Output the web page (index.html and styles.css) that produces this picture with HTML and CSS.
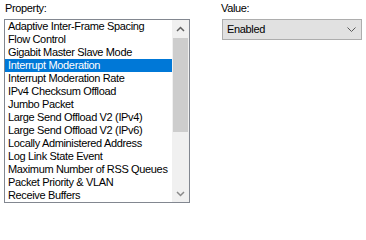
FILE: index.html
```html
<!DOCTYPE html>
<html>
<head>
<meta charset="utf-8">
<link rel="stylesheet" href="styles.css">
</head>
<body>
<div class="dialog">
  <div class="col col-left">
    <div class="label">Property:</div>
    <div class="listbox">
      <div class="items">
        <div class="item">Adaptive Inter-Frame Spacing</div>
        <div class="item">Flow Control</div>
        <div class="item">Gigabit Master Slave Mode</div>
        <div class="item selected">Interrupt Moderation</div>
        <div class="item">Interrupt Moderation Rate</div>
        <div class="item">IPv4 Checksum Offload</div>
        <div class="item">Jumbo Packet</div>
        <div class="item">Large Send Offload V2 (IPv4)</div>
        <div class="item">Large Send Offload V2 (IPv6)</div>
        <div class="item">Locally Administered Address</div>
        <div class="item">Log Link State Event</div>
        <div class="item">Maximum Number of RSS Queues</div>
        <div class="item">Packet Priority &amp; VLAN</div>
        <div class="item">Receive Buffers</div>
      </div>
      <div class="scrollbar">
        <div class="sb-btn">
          <svg width="9" height="6" viewBox="0 0 9 6"><polyline points="1,5 4.5,1.5 8,5" fill="none" stroke="#606060" stroke-width="1.5"/></svg>
        </div>
        <div class="sb-track">
          <div class="sb-thumb"></div>
        </div>
        <div class="sb-btn">
          <svg width="9" height="6" viewBox="0 0 9 6"><polyline points="1,1 4.5,4.5 8,1" fill="none" stroke="#8a8a8a" stroke-width="1.5"/></svg>
        </div>
      </div>
    </div>
  </div>
  <div class="col col-right">
    <div class="label">Value:</div>
    <div class="combo">
      <span class="combo-text">Enabled</span>
      <svg class="combo-arrow" width="9" height="5" viewBox="0 0 9 5"><polyline points="0.5,0.5 4.5,4.5 8.5,0.5" fill="none" stroke="#5a5a5a" stroke-width="1"/></svg>
    </div>
  </div>
</div>
</body>
</html>
```
FILE: styles.css
```css
html, body {
  margin: 0;
  padding: 0;
  background: #ffffff;
}
body {
  font-family: "Liberation Sans", Arial, sans-serif;
  font-size: 11px;
  letter-spacing: -0.35px;
  color: #000000;
  width: 366px;
  height: 207px;
  overflow: hidden;
}
.dialog {
  display: flex;
  padding: 2px 0 0 4px;
  gap: 32px;
}
.col {
  display: flex;
  flex-direction: column;
}
.label {
  line-height: 13px;
  height: 13px;
  margin-bottom: 4px;
  padding-left: 1px;
}
.col-right .label {
  padding-left: 0;
  margin-left: -1px;
}
.listbox {
  width: 186px;
  height: 184px;
  box-sizing: border-box;
  border: 1px solid #828790;
  display: flex;
}
.items {
  flex: 1;
  overflow: hidden;
}
.item {
  height: 13px;
  line-height: 13px;
  padding-left: 3px;
  white-space: nowrap;
}
.item.selected {
  background: #0078d7;
  color: #ffffff;
}
.scrollbar {
  width: 17px;
  background: #f0f0f0;
  display: flex;
  flex-direction: column;
}
.sb-btn {
  height: 17px;
  display: flex;
  align-items: center;
  justify-content: center;
}
.sb-track {
  flex: 1;
  padding: 1px 1px 0;
}
.sb-thumb {
  height: 94px;
  background: #cdcdcd;
}
.combo {
  width: 140px;
  height: 21px;
  box-sizing: border-box;
  border: 1px solid #adadad;
  background: #e1e1e1;
  display: flex;
  align-items: center;
  justify-content: space-between;
  padding: 0 5px 0 4px;
}
.combo-text {
  line-height: 13px;
}
```
